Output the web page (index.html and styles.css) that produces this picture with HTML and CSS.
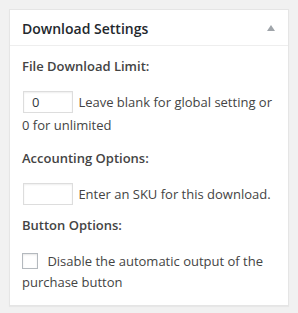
FILE: index.html
```html
<!DOCTYPE html>
<html>
<head>
    <link rel="stylesheet" href="styles.css">
</head>
<body>
    <div class="postbox">
        <div class="postbox-header">
            <h2>Download Settings</h2>
            <span class="toggle-arrow"></span>
        </div>
        <div class="inside">
            <p class="option-title">File Download Limit:</p>
            <p class="option-row">
                <input type="text" class="small-text" value="0">
                Leave blank for global setting or 0 for unlimited
            </p>

            <p class="option-title">Accounting Options:</p>
            <p class="option-row single-row">
                <input type="text" class="small-text" value="">
                Enter an SKU for this download.
            </p>

            <p class="option-title check-title">Button Options:</p>
            <p class="option-row check-row">
                <label>
                    <input type="checkbox" class="check">
                    Disable the automatic output of the purchase button
                </label>
            </p>
        </div>
    </div>
</body>
</html>
```

FILE: styles.css
```css
body {
    margin: 0;
    padding: 9px 9px 10px 9px;
    background: #f1f1f1;
    font-family: 'Open Sans', sans-serif;
    color: #444;
}

.postbox {
    background: #fff;
    border: 1px solid #e5e5e5;
    box-shadow: 0 1px 1px rgba(0, 0, 0, 0.04);
}

.postbox-header {
    display: flex;
    justify-content: space-between;
    align-items: center;
    height: 34px;
    padding: 1px 13px 0 12px;
    border-bottom: 1px solid #eee;
}

h2 {
    margin: 0;
    font-size: 14px;
    font-weight: 600;
    color: #23282d;
}

.toggle-arrow {
    width: 0;
    height: 0;
    border-left: 4px solid transparent;
    border-right: 4px solid transparent;
    border-bottom: 6px solid #a0a5aa;
}

.inside {
    padding: 10px 12px 12px 12px;
}

.option-title {
    margin: 0 0 15px 0;
    font-size: 13px;
    font-weight: 600;
    line-height: 20px;
}

.check-title {
    margin-bottom: 16px;
}

.option-row {
    margin: 0 0 11px 0;
    font-size: 13px;
    line-height: 23px;
}

.single-row {
    margin-bottom: 9px;
}

.check-row {
    margin-bottom: 0;
    line-height: 21px;
}

.small-text {
    width: 50px;
    height: 22px;
    box-sizing: border-box;
    margin: 0 2px 0 1px;
    padding: 0 8px;
    border: 1px solid #ddd;
    box-shadow: inset 0 1px 2px rgba(0, 0, 0, 0.07);
    font-family: 'Open Sans', sans-serif;
    font-size: 13px;
    color: #32373c;
    vertical-align: baseline;
}

.check {
    appearance: none;
    width: 16px;
    height: 16px;
    margin: 0 6px 0 0;
    border: 1px solid #b4b9be;
    background: #fff;
    box-shadow: inset 0 1px 2px rgba(0, 0, 0, 0.1);
    vertical-align: -3px;
}
```
